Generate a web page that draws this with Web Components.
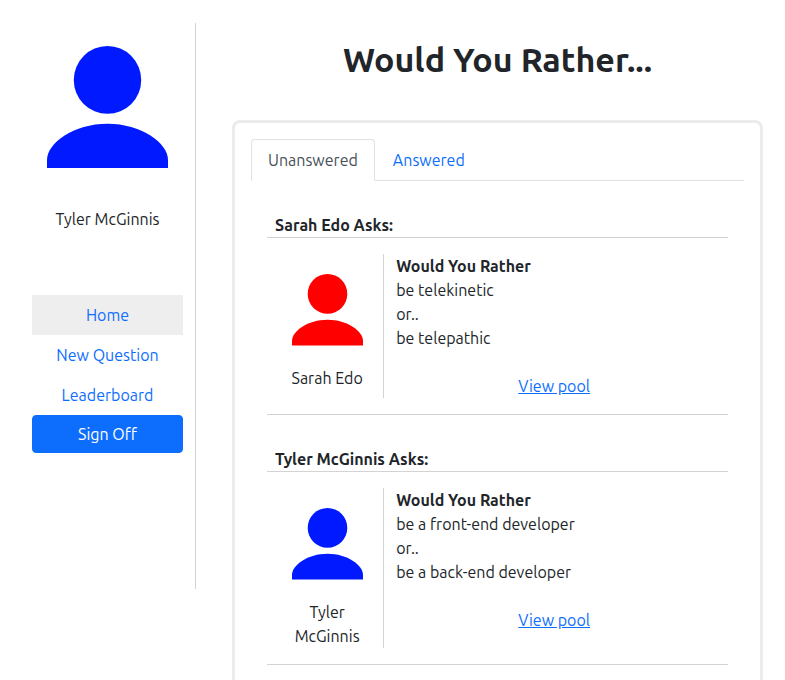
<!DOCTYPE html>
<html lang="en">
<head>
<meta charset="utf-8">
<title>Would You Rather...</title>
<style>
  html { scrollbar-width: none; }
  body {
    margin: 0;
    background: #fff;
    color: #212529;
    font: 400 16px/24px Ubuntu, "Noto Sans", sans-serif;
    --link: #0d6efd;
    --line: #d3d3d3;
    --frame: #ebebeb;
    --tab-line: #dee2e6;
  }
</style>
</head>
<body>
<poll-app>
  <user-sidebar slot="side" name="Tyler McGinnis" color="#0019ff">
    <nav-item href="#home" active>Home</nav-item>
    <nav-item href="#new">New Question</nav-item>
    <nav-item href="#leaderboard">Leaderboard</nav-item>
  </user-sidebar>
  <span slot="title">Would You Rather...</span>
  <poll-tabs>
    <poll-question author="Sarah Edo" color="#ff0000" first="be telekinetic" second="be telepathic"></poll-question>
    <poll-question author="Tyler McGinnis" color="#0019ff" first="be a front-end developer" second="be a back-end developer"></poll-question>
  </poll-tabs>
</poll-app>

<script>
class BaseElement extends HTMLElement {
  connectedCallback() {
    if (this.shadowRoot) return;
    this.attachShadow({ mode: "open" }).innerHTML =
      "<style>*{box-sizing:border-box}</style>" + this.render();
  }
  attr(name) { return this.getAttribute(name) || ""; }
}

customElements.define("poll-app", class extends BaseElement {
  render() {
    return `
      <style>
        :host { display: grid; grid-template-columns: 176px minmax(0, 1fr); gap: 36px; align-items: start; padding: 20px 22px 20px 20px; }
        aside { padding-top: 3px; }
        h1 { margin: 19px 0 41px; font-size: 34px; line-height: 40px; font-weight: 600; text-align: center; }
      </style>
      <aside><slot name="side"></slot></aside>
      <main><h1><slot name="title"></slot></h1><slot></slot></main>`;
  }
});

customElements.define("user-avatar", class extends BaseElement {
  render() {
    return `
      <style>
        :host { display: block; }
        svg { display: block; width: 100%; height: auto; }
      </style>
      <svg viewBox="0 0 122 123" fill="${this.attr("color")}" aria-hidden="true">
        <ellipse cx="61" cy="34.2" rx="34" ry="34.2"/>
        <path d="M0 123V115C0 98 27 78.5 61 78.5S122 98 122 115V123Z"/>
      </svg>`;
  }
});

customElements.define("nav-item", class extends BaseElement {
  render() {
    return `
      <style>
        :host { display: block; }
        :host([active]) { background: #eee; }
        a { display: block; padding: 8px; color: var(--link); text-align: center; text-decoration: none; }
      </style>
      <a href="${this.attr("href")}"><slot></slot></a>`;
  }
});

customElements.define("user-sidebar", class extends BaseElement {
  render() {
    return `
      <style>
        :host { display: block; padding: 23px 12px 136px; border-right: 1px solid var(--line); text-align: center; }
        user-avatar { width: 121px; margin: 0 auto; }
        p { margin: 39px 0 64px; }
        button { display: block; width: 100%; padding: 6px 12px; border: 1px solid var(--link); border-radius: 4px; background: var(--link); color: #fff; font: inherit; cursor: pointer; }
      </style>
      <user-avatar color="${this.attr("color")}"></user-avatar>
      <p>${this.attr("name")}</p>
      <nav><slot></slot></nav>
      <button type="button">Sign Off</button>`;
  }
});

customElements.define("poll-tabs", class extends BaseElement {
  render() {
    return `
      <style>
        :host { display: block; padding: 16px; border: 3px solid var(--frame); border-radius: 8px; }
        [role=tablist] { display: flex; gap: 1px; border-bottom: 1px solid var(--tab-line); }
        button { margin: 0 0 -1px; padding: 8px 16px; border: 1px solid transparent; border-radius: 4px 4px 0 0; background: none; color: var(--link); font: inherit; cursor: pointer; }
        [aria-selected=true] { background: #fff; color: #495057; border-color: var(--tab-line) var(--tab-line) #fff; }
        [role=tabpanel] { padding: 0 16px 16px; }
      </style>
      <div role="tablist">
        <button type="button" role="tab" id="open" aria-selected="true">Unanswered</button>
        <button type="button" role="tab" aria-selected="false">Answered</button>
      </div>
      <div role="tabpanel" aria-labelledby="open"><slot></slot></div>`;
  }
});

customElements.define("poll-question", class extends BaseElement {
  render() {
    return `
      <style>
        :host { display: block; padding-top: 32px; border-bottom: 1px solid var(--line); }
        h2 { margin: 0; padding: 0 8px; border-bottom: 1px solid var(--line); font: inherit; font-weight: 700; }
        .body { display: grid; grid-template-columns: 1fr 3fr; padding: 16px 4px; }
        .author { padding: 20px 12px 0; border-right: 1px solid var(--line); text-align: center; }
        user-avatar { width: 71px; margin: 0 auto 20px; }
        .text { padding: 0 12px; }
        strong, span { display: block; }
        .view { margin-top: 24px; text-align: center; }
        a { color: var(--link); }
      </style>
      <h2>${this.attr("author")} Asks:</h2>
      <div class="body">
        <div class="author"><user-avatar color="${this.attr("color")}"></user-avatar>${this.attr("author")}</div>
        <div class="text">
          <strong>Would You Rather</strong>
          <span>${this.attr("first")}</span>
          <span>or..</span>
          <span>${this.attr("second")}</span>
          <div class="view"><a href="#pool">View pool</a></div>
        </div>
      </div>`;
  }
});
</script>
</body>
</html>
